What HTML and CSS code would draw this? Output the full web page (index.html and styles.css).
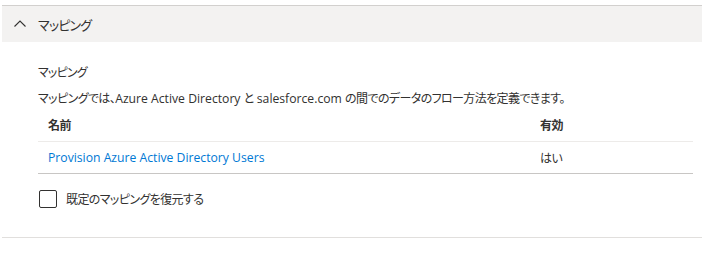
FILE: index.html
```html
<!DOCTYPE html>
<html lang="ja">
<head>
<meta charset="utf-8">
<link rel="stylesheet" href="styles.css">
</head>
<body>
<section class="panel">
  <div class="panel-head">
    <svg class="chev" width="12" height="7" viewBox="0 0 12 7"><path d="M0.5 6.5 L6 1 L11.5 6.5" fill="none" stroke="#323130" stroke-width="1.1"/></svg>
    <span class="panel-title j">マッピング</span>
  </div>
  <div class="panel-body">
    <div class="sub-title j">マッピング</div>
    <div class="desc"><span class="j">マッピングでは、</span>Azure Active Directory <span class="j">と</span> salesforce.com <span class="j">の間でのデータのフロー方法を定義できます。</span></div>
    <div class="table">
      <div class="row head">
        <div class="c-name j">名前</div>
        <div class="c-en j">有効</div>
      </div>
      <div class="row item">
        <div class="c-name"><a class="link" href="#">Provision Azure Active Directory Users</a></div>
        <div class="c-en j">はい</div>
      </div>
    </div>
    <label class="check">
      <span class="box"></span>
      <span class="check-label j">既定のマッピングを復元する</span>
    </label>
  </div>
</section>
</body>
</html>
```
FILE: styles.css
```css
html, body {
  margin: 0;
  padding: 0;
  background: #ffffff;
}
body {
  font-family: "Open Sans", "Noto Sans CJK JP", sans-serif;
  font-size: 12.2px;
  color: #323130;
  font-feature-settings: "palt";
}
.j {
  font-size: 12px;
  letter-spacing: -0.6px;
}
.panel {
  margin: 5px 3px 0 2px;
  border-top: 1px solid #d2d0ce;
  border-bottom: 1px solid #e1dfdd;
}
.panel-head {
  height: 36px;
  background: #f3f2f1;
  display: flex;
  align-items: center;
  padding-left: 12px;
}
.chev {
  display: block;
  margin-right: 12px;
  margin-top: -2px;
}
.panel-title.j {
  font-size: 13px;
  letter-spacing: -0.8px;
}
.panel-body {
  padding: 22px 9px 29px 36px;
}
.sub-title {
  line-height: 18px;
}
.sub-title.j {
  letter-spacing: -0.8px;
}
.desc {
  margin-top: 8px;
  line-height: 18px;
}
.row {
  display: flex;
  align-items: center;
  padding-left: 10px;
}
.row.head {
  height: 33px;
  border-bottom: 1px solid #edebe9;
  font-weight: 600;
}
.row.item {
  height: 31px;
  border-bottom: 1px solid #c8c6c4;
}
.c-name {
  width: 492px;
}
.link {
  color: #0078d4;
  text-decoration: none;
}
.check {
  display: flex;
  align-items: center;
  height: 18px;
  margin-top: 16px;
  margin-left: 1px;
}
.box {
  width: 16px;
  height: 16px;
  border: 1px solid #323130;
  border-radius: 2px;
  margin-right: 9px;
}
```
